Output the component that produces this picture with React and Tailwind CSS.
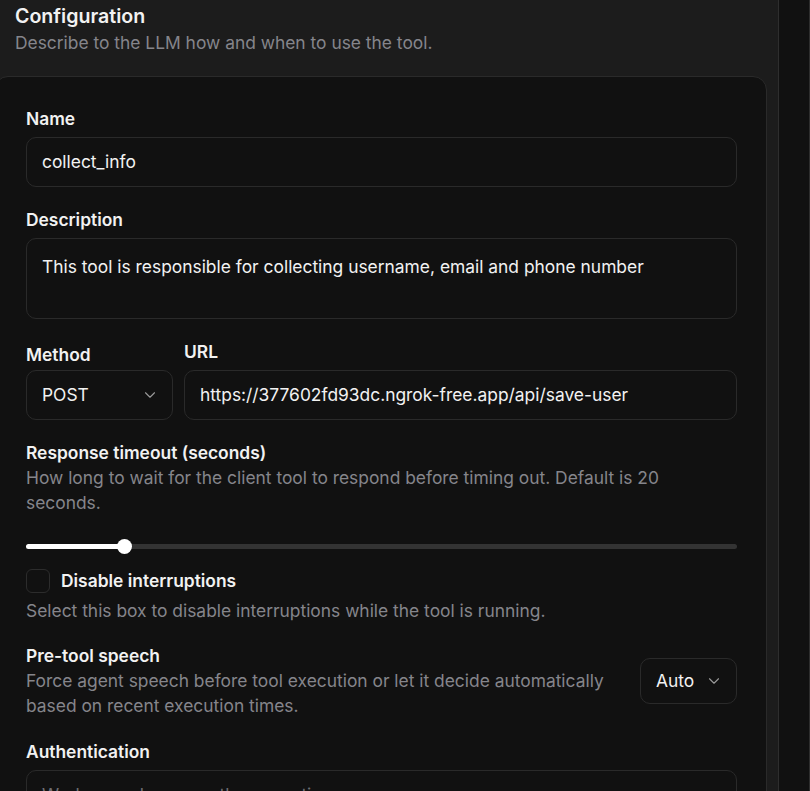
import React from "react";
import { ChevronDown } from "lucide-react";

const font = { fontFamily: "Inter, 'Noto Sans', sans-serif" };

function Label({ children, className = "" }) {
  return (
    <div className={`text-[17.4px] leading-6 font-semibold text-[#f2f2f2] ${className}`}>
      {children}
    </div>
  );
}

function Box({ children, className = "" }) {
  return (
    <div
      className={`rounded-[10px] border border-[#2a2a2a] bg-[#111111] pl-[15px] text-[17.4px] text-[#f2f2f2] ${className}`}
    >
      {children}
    </div>
  );
}

export default function App() {
  return (
    <div style={font} className="flex h-[791px] w-[810px] overflow-hidden bg-[#111111]">
      <div className="w-[779px] shrink-0 border-r border-[#2e2e2e] bg-[#1c1c1c] pt-[2px]">
        <div className="px-[15px]">
          <div className="text-[19.6px] leading-7 font-semibold text-[#f2f2f2]">Configuration</div>
          <div className="mt-[1px] text-[17.4px] leading-6 text-[#85858b]">
            Describe to the LLM how and when to use the tool.
          </div>
        </div>
        <div className="ml-[-6px] mt-[21px] h-[760px] w-[773px] rounded-[14px] border border-[#2a2a2a] bg-[#111111] pl-[31px] pr-[29px] pt-[30px]">
          <Label>Name</Label>
          <Box className="mt-[6px] flex h-[50px] items-center pr-4">collect_info</Box>

          <Label className="mt-[21px]">Description</Label>
          <Box className="mt-[6px] h-[81px] pr-4 pt-[15px]">
            This tool is responsible for collecting username, email and phone number
          </Box>

          <div className="mt-[21px] flex gap-[11px]">
            <div className="flex w-[147px] flex-col justify-end">
              <Label className="mb-[3px]">Method</Label>
              <Box className="flex h-[50px] items-center justify-between pr-[13px]">
                <span>POST</span>
                <ChevronDown size={18} strokeWidth={1.5} className="text-[#9a9a9a]" />
              </Box>
            </div>
            <div className="flex flex-1 flex-col">
              <Label className="mb-[6px]">URL</Label>
              <Box className="flex h-[50px] items-center pr-4">
                https://377602fd93dc.ngrok-free.app/api/save-user
              </Box>
            </div>
          </div>

          <Label className="mt-[21px]">Response timeout (seconds)</Label>
          <div className="max-w-[680px] text-[17.4px] leading-[25px] text-[#85858b]">
            How long to wait for the client tool to respond before timing out. Default is 20 seconds.
          </div>

          <div className="relative mt-[29px] h-[5px] rounded-full bg-[#333333]">
            <div className="h-[5px] w-[98px] rounded-full bg-white" />
            <div className="absolute left-[91px] top-[-5px] h-[15px] w-[15px] rounded-full bg-white" />
          </div>

          <div className="mt-[20px] flex items-center gap-[11px]">
            <div className="h-[24px] w-[24px] rounded-[6px] border border-[#2c2c2c]" />
            <div className="text-[17.4px] leading-6 font-semibold text-[#f2f2f2]">Disable interruptions</div>
          </div>
          <div className="mt-[6px] text-[17.4px] leading-6 text-[#85858b]">
            Select this box to disable interruptions while the tool is running.
          </div>

          <div className="mt-[21px] flex items-center justify-between">
            <div className="w-[600px]">
              <Label>Pre-tool speech</Label>
              <div className="text-[17.4px] leading-[25px] text-[#85858b]">
                Force agent speech before tool execution or let it decide automatically based on recent execution times.
              </div>
            </div>
            <Box className="flex h-[46px] w-[97px] items-center justify-between pr-[13px]">
              <span>Auto</span>
              <ChevronDown size={18} strokeWidth={1.5} className="text-[#9a9a9a]" />
            </Box>
          </div>

          <Label className="mt-[22px]">Authentication</Label>
          <Box className="mt-[6px] flex h-[50px] items-center justify-between pr-[16px] text-[#85858b]">
            <span className="text-[#6e6e74]">Workspace has no auth connections</span>
            <ChevronDown size={18} strokeWidth={1.5} className="text-[#9a9a9a]" />
          </Box>
        </div>
      </div>
      <div className="flex-1 border-r border-[#2e2e2e] bg-[#111111]" />
    </div>
  );
}
